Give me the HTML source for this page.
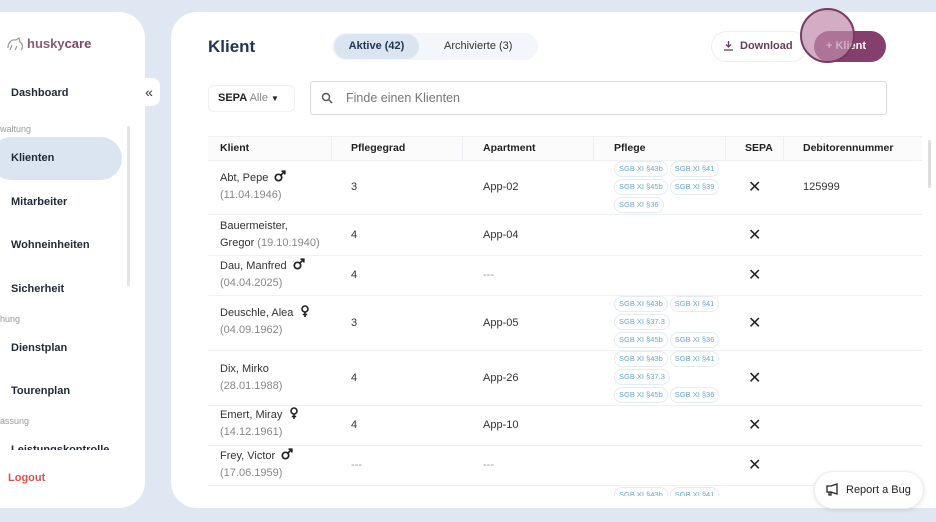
<!DOCTYPE html>
<html><head><meta charset="utf-8"><style>
*{box-sizing:border-box;margin:0;padding:0}
body{width:936px;height:522px;overflow:hidden;background:#dfe7f3;font-family:"Liberation Sans",sans-serif;position:relative;color:#222}
.side{position:absolute;left:-30px;top:12px;width:175px;height:496px;background:#fff;border-radius:26px}
.main{position:absolute;left:171px;top:12px;width:800px;height:496px;background:#fff;border-radius:26px}
.a{position:absolute;white-space:nowrap}
.nav{font-size:11px;font-weight:bold;color:#1f2a37}
.sec{font-size:9px;color:#999}
.tg{position:absolute;width:110px;white-space:normal;line-height:18px;font-size:0}
.tag{display:inline-block;vertical-align:top;height:16px;line-height:14px;font-size:7.5px;color:#6aa7cf;border:1px solid #e4ecf3;border-radius:8px;padding:0 4px;margin-right:2px;margin-bottom:2px}
.th{font-size:10.5px;font-weight:bold;color:#222;top:142px}
.hl{position:absolute;left:208px;width:714px;height:1px;background:#eceff3}
.vl{position:absolute;top:136px;width:1px;height:24px;background:#eceff3}
.nm{font-size:11px;color:#333;line-height:17px}
.nm svg{margin-left:6px;vertical-align:-1px}
.dt{color:#888}
.c{font-size:11px;color:#333}
.x{font-size:16px;color:#222;left:748px}
</style></head><body>
<svg width="0" height="0" style="position:absolute"><defs>
<symbol id="m" viewBox="0 0 12 12"><circle cx="4.5" cy="7.5" r="3.2" fill="none" stroke="#222" stroke-width="1.7"/><path d="M7 5L10.5 1.5M7.5 1.2h3.3v3.3" fill="none" stroke="#222" stroke-width="1.7"/></symbol>
<symbol id="f" viewBox="0 0 12 12"><circle cx="6" cy="4" r="3" fill="none" stroke="#222" stroke-width="1.6"/><path d="M6 7v5M3.8 9.5h4.4" fill="none" stroke="#222" stroke-width="1.6"/></symbol>
</defs></svg>
<div class="side"></div>
<div class="main"></div>
<svg class="a" style="left:6px;top:36px" width="20" height="16" viewBox="0 0 20 16"><path d="M2 12 C2 6 6 3 10 4 L13 2 L14 6 C17 8 17 12 15 14 M6 9 L4 14 M9 14 L11 10" fill="none" stroke="#999" stroke-width="1.2"/></svg>
<div class="a" style="left:27px;top:36px;font-size:13px;color:#8a5a78;font-weight:bold">husky<span style="color:#7a4468">care</span></div>
<div class="a nav" style="left:11px;top:87px">Dashboard</div>
<div class="a" style="left:138px;top:78px;width:22px;height:28px;background:#fff;border-radius:8px;font-size:14px;text-align:center;line-height:28px;color:#333">«</div>
<div class="a sec" style="left:0;top:124px">waltung</div>
<div class="a" style="left:-10px;top:137px;width:132px;height:43px;background:#dbe5f1;border-radius:22px"></div>
<div class="a" style="left:127px;top:126px;width:3px;height:160px;background:#e4e4e4;border-radius:2px"></div>
<div class="a nav" style="left:11px;top:152px">Klienten</div>
<div class="a nav" style="left:11px;top:196px">Mitarbeiter</div>
<div class="a nav" style="left:11px;top:239px">Wohneinheiten</div>
<div class="a nav" style="left:11px;top:283px">Sicherheit</div>
<div class="a sec" style="left:0;top:314px">hung</div>
<div class="a nav" style="left:11px;top:342px">Dienstplan</div>
<div class="a nav" style="left:11px;top:385px">Tourenplan</div>
<div class="a sec" style="left:0;top:416px">assung</div>
<div class="a" style="left:11px;top:441px;height:9px;overflow:hidden"><div class="nav" style="margin-top:3px">Leistungskontrolle</div></div>
<div class="a" style="left:8px;top:472px;font-size:11px;font-weight:bold;color:#d9534f">Logout</div>

<div class="a" style="left:208px;top:37px;font-size:17px;font-weight:bold;color:#1f3550">Klient</div>
<div class="a" style="left:332px;top:33px;width:206px;height:27px;background:#f3f6fa;border-radius:14px"></div>
<div class="a" style="left:334px;top:34px;width:85px;height:25px;background:#dbe5f1;border-radius:13px;font-size:11px;font-weight:bold;color:#1f3550;text-align:center;line-height:25px">Aktive (42)</div>
<div class="a" style="left:444px;top:40px;font-size:11px;color:#333">Archivierte (3)</div>
<div class="a" style="left:711px;top:31px;width:96px;height:31px;border:1px solid #eee;border-radius:16px;font-size:11px;font-weight:bold;color:#6b3b5a;line-height:29px;padding-left:28px">Download</div>
<svg class="a" style="left:723px;top:40px" width="11" height="11" viewBox="0 0 11 11"><path d="M5.5 1v6M3 4.5l2.5 2.5 2.5-2.5M1 10h9" fill="none" stroke="#6b3b5a" stroke-width="1.3"/></svg>
<div class="a" style="left:814px;top:31px;width:72px;height:31px;background:#853f6c;border-radius:16px;font-size:11px;font-weight:bold;color:#fff;line-height:31px;padding-left:12px">+ Klient</div>
<div class="a" style="left:800px;top:8px;width:55px;height:55px;border-radius:50%;background:rgba(190,140,170,.7);border:2px solid #7a3a62"></div>

<div class="a" style="left:208px;top:85px;width:87px;height:27px;border:1px solid #eef0f3;border-radius:6px;font-size:11px;line-height:25px;padding-left:9px"><b>SEPA</b> <span style="color:#888">Alle</span> <span style="font-size:8px">▼</span></div>
<div class="a" style="left:310px;top:81px;width:577px;height:34px;border:1px solid #d8dbe0;border-radius:3px"></div>
<svg class="a" style="left:321px;top:92px" width="12" height="12"><circle cx="5" cy="5" r="3.5" fill="none" stroke="#555" stroke-width="1.4"/><path d="M7.5 7.5L11 11" stroke="#555" stroke-width="1.4"/></svg>
<div class="a" style="left:346px;top:91px;font-size:12.5px;color:#777">Finde einen Klienten</div>

<div class="a" style="left:208px;top:136px;width:714px;height:24px;background:#fbfbfc"></div>
<div class="vl" style="left:331px"></div><div class="vl" style="left:462px"></div><div class="vl" style="left:593px"></div><div class="vl" style="left:725px"></div><div class="vl" style="left:783px"></div>
<div class="a th" style="left:220px">Klient</div><div class="a th" style="left:351px">Pflegegrad</div><div class="a th" style="left:483px">Apartment</div><div class="a th" style="left:614px">Pflege</div><div class="a th" style="left:745px">SEPA</div><div class="a th" style="left:803px">Debitorennummer</div>
<div class="a" style="left:928px;top:140px;width:3px;height:48px;background:#ddd;border-radius:2px"></div>
<div class="hl" style="top:136px"></div><div class="hl" style="top:160px"></div><div class="hl" style="top:214px"></div><div class="hl" style="top:255px"></div><div class="hl" style="top:295px"></div><div class="hl" style="top:350px"></div><div class="hl" style="top:405px"></div><div class="hl" style="top:445px"></div><div class="hl" style="top:485px"></div>

<div class="a nm" style="left:220px;top:170px">Abt, Pepe<svg width="12" height="12"><use href="#m"/></svg><br><span class="dt">(11.04.1946)</span></div>
<div class="a c" style="left:351px;top:181px">3</div><div class="a c" style="left:483px;top:181px">App-02</div>
<div class="tg" style="left:614px;top:161px"><span class="tag">SGB XI §43b</span><span class="tag">SGB XI §41</span><br><span class="tag">SGB XI §45b</span><span class="tag">SGB XI §39</span><br><span class="tag">SGB XI §36</span></div>
<div class="a x" style="top:177px">✕</div><div class="a c" style="left:803px;top:181px">125999</div>

<div class="a nm" style="left:220px;top:218px">Bauermeister,<br>Gregor <span class="dt">(19.10.1940)</span></div>
<div class="a c" style="left:351px;top:229px">4</div><div class="a c" style="left:483px;top:229px">App-04</div><div class="a x" style="top:225px">✕</div>

<div class="a nm" style="left:220px;top:258px">Dau, Manfred<svg width="12" height="12"><use href="#m"/></svg><br><span class="dt">(04.04.2025)</span></div>
<div class="a c" style="left:351px;top:269px">4</div><div class="a c" style="left:483px;top:269px;color:#999">---</div><div class="a x" style="top:265px">✕</div>

<div class="a nm" style="left:220px;top:305px">Deuschle, Alea<svg width="12" height="12"><use href="#f"/></svg><br><span class="dt">(04.09.1962)</span></div>
<div class="a c" style="left:351px;top:317px">3</div><div class="a c" style="left:483px;top:317px">App-05</div>
<div class="tg" style="left:614px;top:296px"><span class="tag">SGB XI §43b</span><span class="tag">SGB XI §41</span><br><span class="tag">SGB XI §37.3</span><br><span class="tag">SGB XI §45b</span><span class="tag">SGB XI §36</span></div>
<div class="a x" style="top:313px">✕</div>

<div class="a nm" style="left:220px;top:361px">Dix, Mirko<br><span class="dt">(28.01.1988)</span></div>
<div class="a c" style="left:351px;top:372px">4</div><div class="a c" style="left:483px;top:372px">App-26</div>
<div class="tg" style="left:614px;top:351px"><span class="tag">SGB XI §43b</span><span class="tag">SGB XI §41</span><br><span class="tag">SGB XI §37.3</span><br><span class="tag">SGB XI §45b</span><span class="tag">SGB XI §36</span></div>
<div class="a x" style="top:368px">✕</div>

<div class="a nm" style="left:220px;top:407px">Emert, Miray<svg width="12" height="12"><use href="#f"/></svg><br><span class="dt">(14.12.1961)</span></div>
<div class="a c" style="left:351px;top:419px">4</div><div class="a c" style="left:483px;top:419px">App-10</div><div class="a x" style="top:415px">✕</div>

<div class="a nm" style="left:220px;top:448px">Frey, Victor<svg width="12" height="12"><use href="#m"/></svg><br><span class="dt">(17.06.1959)</span></div>
<div class="a c" style="left:351px;top:459px;color:#999">---</div><div class="a c" style="left:483px;top:459px;color:#999">---</div><div class="a x" style="top:455px">✕</div>
<div class="tg" style="left:614px;top:487px;height:9px;overflow:hidden"><span class="tag">SGB XI §43b</span><span class="tag">SGB XI §41</span></div>

<div class="a" style="left:814px;top:471px;width:110px;height:38px;background:#fff;border:1px solid #eee;border-radius:19px;box-shadow:0 1px 4px rgba(0,0,0,.12);font-size:11px;color:#222;line-height:36px;padding-left:31px">Report a Bug</div>
<svg class="a" style="left:826px;top:483px" width="14" height="13" viewBox="0 0 14 13"><path d="M1 3h4l6-2v10l-6-2H1zM3 9v3h2V9" fill="none" stroke="#222" stroke-width="1.3"/></svg>
</body></html>
